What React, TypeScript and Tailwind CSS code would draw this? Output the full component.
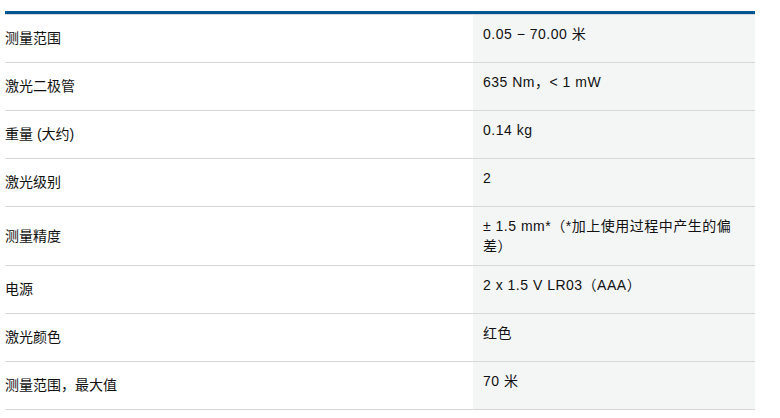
import React from "react";

const specs: { label: string; value: string }[] = [
  { label: "测量范围", value: "0.05 − 70.00 米" },
  { label: "激光二极管", value: "635 Nm，< 1 mW" },
  { label: "重量 (大约)", value: "0.14 kg" },
  { label: "激光级别", value: "2" },
  { label: "测量精度", value: "± 1.5 mm*（*加上使用过程中产生的偏差）" },
  { label: "电源", value: "2 x 1.5 V LR03（AAA）" },
  { label: "激光颜色", value: "红色" },
  { label: "测量范围，最大值", value: "70 米" },
];

export default function App() {
  return (
    <div
      className="min-h-[418px] w-[780px] bg-white pl-[5px] pt-[11px] text-[14px] leading-[20px] text-[#111]"
      style={{ fontFamily: '"Liberation Sans", Arial, "Noto Sans CJK SC", sans-serif' }}
    >
      <div className="w-[750px] border-t-[3px] border-[#005691]">
        <div className="border-t border-[#d7d7d7]">
          {specs.map((row) => (
            <div key={row.label} className="flex border-b border-[#d7d7d7]">
              <div className="flex w-[468px] items-center pb-px">{row.label}</div>
              <div className="min-h-[47px] w-[282px] bg-[#f4f6f6] py-[9px] pl-[10px] pr-[18px] tracking-[0.5px]">
                {row.value}
              </div>
            </div>
          ))}
        </div>
      </div>
    </div>
  );
}
